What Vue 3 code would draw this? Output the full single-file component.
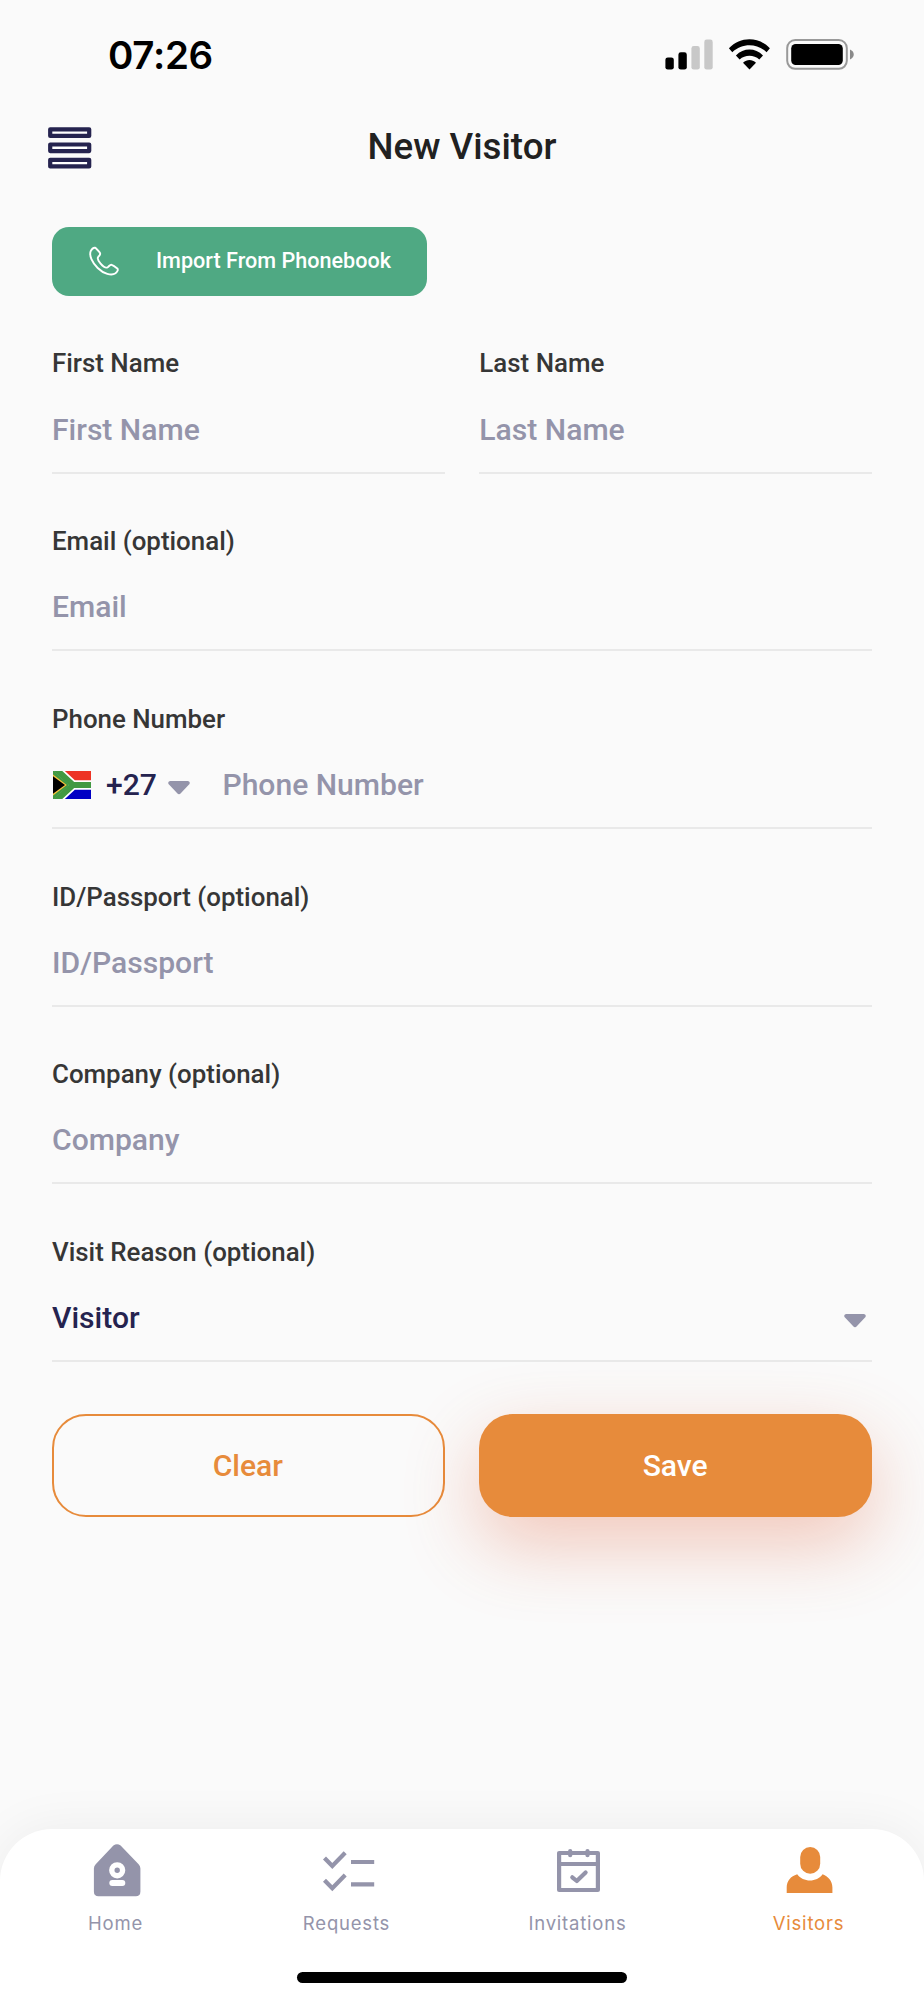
<script setup>
const tabs = [
  { id: 'home', label: 'Home' },
  { id: 'requests', label: 'Requests' },
  { id: 'invitations', label: 'Invitations' },
  { id: 'visitors', label: 'Visitors', active: true },
]
</script>

<template>
  <div class="screen">
    <header class="status">
      <span class="time">07:26</span>
      <svg class="indicators" viewBox="660 34 200 40" width="200" height="40">
        <rect x="665.4" y="57.4" width="8.4" height="12.2" rx="2.4" />
        <rect x="678.4" y="52.3" width="8.4" height="17.3" rx="2.4" />
        <rect x="691.4" y="46" width="8.4" height="23.6" rx="2.4" fill="#c8c8c8" />
        <rect x="704.3" y="39.6" width="8.4" height="30" rx="2.4" fill="#c8c8c8" />
        <path d="M728.9 48.2C740.5 36.2 758.3 36.2 769.9 48.2L766.6 52.2C757 43 742 43 732.3 52.2Z" />
        <path d="M735.9 55.5C743.6 47.6 755.3 47.6 763 55.5L759.3 59.4C753.7 54.5 745.2 54.5 739.6 59.4Z" />
        <path d="M743 62.7C747 59 752 59 756 62.7L749.5 69.5Z" />
        <rect x="787.2" y="40" width="59.6" height="28.8" rx="8" fill="none" stroke="#999" stroke-width="2" />
        <rect x="791.2" y="44" width="51.6" height="21" rx="4.5" />
        <path d="M850 49.6C855 51.5 855 57.6 850 59.4Z" fill="#8a8a8a" />
      </svg>
    </header>

    <div class="titlebar">
      <svg class="menu" viewBox="0 0 44 42" width="44" height="42">
        <g fill="#fff" stroke="#25234f" stroke-width="4.2" stroke-linejoin="round">
          <rect x="2.2" y="2.3" width="39" height="6.6" />
          <rect x="2.2" y="17.5" width="39" height="6.6" />
          <rect x="2.2" y="32.8" width="39" height="6.6" />
        </g>
      </svg>
      <h1>New Visitor</h1>
    </div>

    <main>
      <div class="import">
        <svg viewBox="0 0 30 30" width="30" height="30">
          <path d="M1.7 5.2C2.7 3.1 4.2 1.5 6 1.7C7.2 1.9 8.2 3.4 10.9 6.8C11.7 8 11.3 8.9 9.3 10.8C8 12.2 8.5 14 11.6 17.6C14.5 21 17 22.3 18.7 21.2C20.4 20 21 18.4 22.7 18.8C24 19.2 26 20.5 28.3 22.4C29.4 23.6 28.5 25.8 26.5 27.3C22.5 30 14.5 27.8 8.7 22C3 16.3 0 9.5 1.7 5.2Z" fill="none" stroke="#fff" stroke-width="1.9" stroke-linejoin="round" />
        </svg>
        <span>Import From Phonebook</span>
      </div>

      <div class="pair">
        <div class="field"><label>First Name</label><div class="entry">First Name</div></div>
        <div class="field"><label>Last Name</label><div class="entry">Last Name</div></div>
      </div>
      <div class="field"><label>Email (optional)</label><div class="entry">Email</div></div>
      <div class="field">
        <label>Phone Number</label>
        <div class="entry">
          <svg class="flag" viewBox="0 0 38 28" width="38" height="28">
            <path d="M0 0H38V14H0Z" fill="#ed3324" />
            <path d="M0 14H38V28H0Z" fill="#0000c4" />
            <path d="M0 -4.5L20 14L0 32.5M18 14H38" fill="none" stroke="#fff" stroke-width="9.5" />
            <path d="M0 -4.5L20 14L0 32.5M18 14H38" fill="none" stroke="#429942" stroke-width="6" />
            <path d="M0 -1L16 14L0 29Z" fill="#429942" />
            <path d="M0 3.5L13.8 14L0 24.5Z" fill="#f9c33c" />
            <path d="M0 5.3L12 14L0 22.7Z" fill="#000" />
          </svg>
          <span class="code">+27</span>
          <svg class="caret" viewBox="0 0 22 14" width="22" height="14"><path d="M2 0H20Q22.5 .8 21.5 3L13 12Q11 14.4 9 12L.5 3Q-.5 .8 2 0Z" /></svg>
          <span class="number">Phone Number</span>
        </div>
      </div>
      <div class="field"><label>ID/Passport (optional)</label><div class="entry">ID/Passport</div></div>
      <div class="field"><label>Company (optional)</label><div class="entry">Company</div></div>
      <div class="field">
        <label>Visit Reason (optional)</label>
        <div class="entry select">
          <span>Visitor</span>
          <svg class="caret" viewBox="0 0 22 14" width="22" height="14"><path d="M2 0H20Q22.5 .8 21.5 3L13 12Q11 14.4 9 12L.5 3Q-.5 .8 2 0Z" /></svg>
        </div>
      </div>

      <div class="actions">
        <div class="button clear">Clear</div>
        <div class="button save">Save</div>
      </div>
    </main>

    <nav>
      <div class="tabs">
        <div v-for="tab in tabs" :key="tab.id" class="tab" :class="{ active: tab.active }">
          <svg viewBox="0 0 60 60" width="60" height="60">
            <template v-if="tab.id === 'home'">
              <path d="M27.4 5.6Q31 2.7 34.6 5.6L52.6 24.2Q54.4 26 54.4 28.5V51.5Q54.4 56.2 49.8 56.2H12.5Q7.9 56.2 7.9 51.5V28.5Q7.9 26 9.7 24.2Z" fill="currentColor" />
              <circle cx="31.2" cy="30.3" r="5.4" fill="none" stroke="#fff" stroke-width="5.4" />
              <rect x="23.3" y="40" width="16" height="6" rx="3" fill="#fff" />
            </template>
            <path v-else-if="tab.id === 'requests'" d="M7.5 18L15.3 26L28.2 12.8M7.5 40.2L15.3 48.2L28.2 35M34 22H57.2M34 44.3H57.2" fill="none" stroke="currentColor" stroke-width="4.2" />
            <g v-else-if="tab.id === 'invitations'" fill="none" stroke="currentColor" stroke-width="4.2" stroke-linecap="round" stroke-linejoin="round">
              <rect x="11.1" y="13" width="38.8" height="37" />
              <path d="M11.1 24H49.9M22.2 11V15.2M39.5 11V15.2M24.3 37.3L28.8 41L37.6 32.5" />
            </g>
            <g v-else fill="currentColor">
              <rect x="21.2" y="7" width="20" height="26.8" rx="10" />
              <path d="M7.7 53V47.5C7.7 41 11.7 36.2 18.2 34.2C24.2 42.5 37.8 42.5 43.6 34.2C49.8 36.5 53.4 41.5 53.4 47.5V53Z" />
            </g>
          </svg>
          <span>{{ tab.label }}</span>
        </div>
      </div>
      <div class="home-bar"></div>
    </nav>
  </div>
</template>

<style>
html, body { margin: 0; background: #fafafa; }
</style>

<style scoped>
* { box-sizing: border-box; }
.screen {
  width: 924px; height: 2000px; overflow: hidden;
  display: flex; flex-direction: column;
  background: #fafafa;
  font-family: Roboto, "Liberation Sans", sans-serif; font-weight: 500;
}
.status {
  height: 108px; padding: 34px 64px 0 108px;
  display: flex; justify-content: space-between; align-items: flex-start;
}
.time { font: 600 38.5px/42px Inter, sans-serif; letter-spacing: -.3px; color: #000; }
.indicators { display: block; }
.titlebar {
  height: 119px; padding: 18px 47.5px 0;
  display: grid; grid-template-columns: 44px 1fr 44px; align-items: start;
}
.menu { margin-top: 1px; }
h1 { margin: 0; font-size: 36.7px; line-height: 42px; font-weight: 500; color: #212121; text-align: center; }
main { padding: 0 52px; }
.import {
  width: 375.4px; height: 68.7px; padding-left: 37px; border-radius: 17px;
  display: flex; align-items: center; gap: 37px;
  background: #4fa983; color: #fff; font-size: 21.6px; line-height: 26px;
  margin-bottom: 51.7px;
}
.pair, .actions { display: grid; grid-template-columns: 1fr 1fr; gap: 34.7px; }
.field { display: flex; flex-direction: column; margin-bottom: 51.6px; }
label { font-size: 25.88px; line-height: 32px; color: #363636; margin-bottom: 32.15px; }
.entry {
  height: 62px; display: flex; align-items: flex-start;
  border-bottom: 2px solid #e9e9e9;
  font-size: 30.1px; line-height: 36px; color: #9494aa;
}
.flag { margin: 3.7px 0 0 1px; }
.code { margin-left: 15px; color: #25234f; }
.caret { fill: #9494aa; }
.code + .caret { margin: 13.6px 0 0 11.5px; }
.number { margin-left: 32px; }
.select { justify-content: space-between; color: #25234f; padding-right: 6px; }
.select .caret { margin-top: 14px; }
.button {
  height: 103.5px; border-radius: 34px; font-size: 30.1px; padding: 0 1px 1px 0;
  display: flex; align-items: center; justify-content: center;
}
.clear { border: 2px solid #e78b3b; color: #e78b3b; }
.save { background: #e78b3b; color: #fff; box-shadow: 0 27px 76px rgba(225, 90, 50, .32); }
nav {
  margin-top: auto; height: 171px; border-radius: 52px 52px 0 0;
  background: #fff; box-shadow: 0 0 52px rgba(0, 0, 0, .06);
  display: flex; flex-direction: column; align-items: center;
}
.tabs { width: 100%; height: 143px; padding-top: 11px; display: grid; grid-template-columns: repeat(4, 1fr); }
.tab { display: flex; flex-direction: column; align-items: center; color: #9494aa; }
.tab.active { color: #e78b3b; }
.tab span { margin-top: 10.5px; font: 400 18.5px/24px Inter, sans-serif; letter-spacing: .8px; }
.home-bar { width: 330px; height: 11px; border-radius: 6px; background: #000; }
</style>
